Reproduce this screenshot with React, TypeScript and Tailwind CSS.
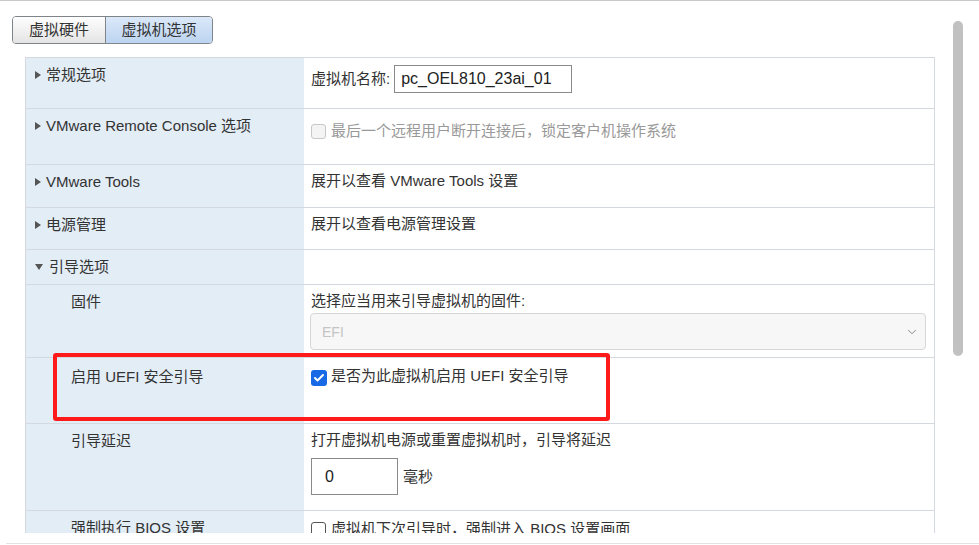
import React from 'react';
import { ChevronDown, Check } from 'lucide-react';

const font = { fontFamily: '"Liberation Sans", "Noto Sans CJK SC", sans-serif' };

function Caret({ open }: { open?: boolean }) {
  return open ? (
    <span className="inline-block w-0 h-0 border-l-[4px] border-r-[4px] border-t-[6px] border-l-transparent border-r-transparent border-t-[#555] mr-[6px] mb-[2px]" />
  ) : (
    <span className="inline-block w-0 h-0 border-t-[4px] border-b-[4px] border-l-[6px] border-t-transparent border-b-transparent border-l-[#555] mr-[5px] mb-[1px]" />
  );
}

function Row({ h, label, children, last }: { h: string; label: React.ReactNode; children?: React.ReactNode; last?: boolean }) {
  return (
    <div className={`flex ${h} ${last ? '' : 'border-b border-[#d3d9df]'}`}>
      <div className="w-[278px] shrink-0 bg-[#e3edf6] pt-[7px] pl-[9px] text-[15px] leading-[20px] text-[#333]">{label}</div>
      <div className="flex-1 pt-[6px] pl-[7px] pr-[8px] text-[15px] leading-[20px] text-[#333]">{children}</div>
    </div>
  );
}

function Box({ checked, disabled }: { checked?: boolean; disabled?: boolean }) {
  if (checked) {
    return (
      <span className="inline-flex items-center justify-center w-[16px] h-[16px] rounded-[3px] bg-[#1769e6] mr-[4px] align-[-3px]">
        <Check className="w-[12px] h-[12px] text-white" strokeWidth={4} />
      </span>
    );
  }
  return (
    <span
      className={`inline-block w-[15px] h-[15px] rounded-[3px] border mr-[5px] align-[-3px] ${
        disabled ? 'border-[#c8c8c8] bg-[#f4f4f4]' : 'border-[#555] bg-white'
      }`}
    />
  );
}

export default function App() {
  return (
    <div className="relative w-[979px] h-[545px] overflow-hidden bg-white border-t border-[#c9c9c9]" style={font}>
      {/* tabs */}
      <div className="ml-[12px] mt-[15px] flex w-fit h-[28px] rounded-[4px] border border-[#7f8489] overflow-hidden text-[15px] text-[#333]">
        <div className="w-[92px] flex items-center justify-center bg-gradient-to-b from-[#fefefe] to-[#e4e4e4]">虚拟硬件</div>
        <div className="w-[107px] flex items-center justify-center border-l border-[#7f8489] bg-gradient-to-b from-[#dbe8f8] to-[#bcd4f1]">虚拟机选项</div>
      </div>

      {/* settings table */}
      <div className="ml-[25px] mt-[13px] w-[910px] h-[476px] overflow-hidden border-t border-l border-r border-[#d3d9df]">
        <Row h="h-[51px]" label={<><Caret />常规选项</>}>
          <div className="flex items-center pt-[1px]">
            <span className="mr-[4px]">虚拟机名称:</span>
            <div className="w-[178px] h-[28px] border border-[#8a8a8a] flex items-center pl-[6px] text-[16px] text-[#222]">pc_OEL810_23ai_01</div>
          </div>
        </Row>
        <Row h="h-[56px]" label={<><Caret />VMware Remote Console 选项</>}>
          <div className="pt-[6px] text-[#999]">
            <Box disabled />最后一个远程用户断开连接后，锁定客户机操作系统
          </div>
        </Row>
        <Row h="h-[43px]" label={<><Caret />VMware Tools</>}>
          展开以查看 VMware Tools 设置
        </Row>
        <Row h="h-[42px]" label={<><Caret />电源管理</>}>
          展开以查看电源管理设置
        </Row>
        <Row h="h-[35px]" label={<><Caret open />引导选项</>} />
        <Row h="h-[73px]" label={<span className="pl-[36px]">固件</span>}>
          <div>选择应当用来引导虚拟机的固件:</div>
          <div className="mt-[2px] -ml-[1px] h-[37px] rounded-[4px] border border-[#d6d6d6] bg-[#f7f7f7] flex items-center justify-between pl-[11px] pr-[6px]">
            <span className="text-[14px] text-[#c4c4c4]">EFI</span>
            <ChevronDown className="w-[14px] h-[14px] text-[#777]" strokeWidth={1.5} />
          </div>
        </Row>
        <Row h="h-[66px]" label={<span className="pl-[36px] block pt-[2px]">启用 UEFI 安全引导</span>}>
          <div className="pt-[2px]">
            <Box checked />是否为此虚拟机启用 UEFI 安全引导
          </div>
        </Row>
        <Row h="h-[87px]" label={<span className="pl-[36px] block">引导延迟</span>}>
          <div>打开虚拟机电源或重置虚拟机时，引导将延迟</div>
          <div className="mt-[8px] flex items-center">
            <div className="w-[87px] h-[37px] border border-[#8a8a8a] flex items-center pl-[13px] text-[16px] text-[#222]">0</div>
            <span className="ml-[5px]">毫秒</span>
          </div>
        </Row>
        <Row h="h-[60px]" last label={<span className="pl-[36px] block">强制执行 BIOS 设置</span>}>
          <div className="pt-[2px]">
            <Box />虚拟机下次引导时，强制进入 BIOS 设置画面
          </div>
        </Row>
      </div>

      {/* bottom edge */}
      <div className="absolute left-[6px] right-0 bottom-[1px] h-px bg-[#e2e2e2]" />

      {/* scrollbar */}
      <div className="absolute left-[953px] top-[20px] w-[10px] h-[335px] rounded-full bg-[#c1c1c1]" />

      {/* highlight annotation */}
      <div className="absolute left-[53px] top-[352px] w-[557px] h-[68px] border-[4px] border-[#ff1a1a] rounded-[3px]" />
    </div>
  );
}
